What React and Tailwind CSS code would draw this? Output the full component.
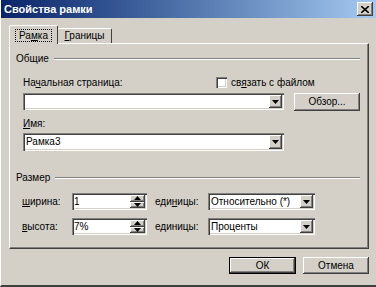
import React from "react";

const raised =
  "bg-[#d4d0c8] shadow-[inset_-1px_-1px_#404040,inset_1px_1px_#ffffff,inset_-2px_-2px_#808080]";
const sunken =
  "bg-white shadow-[inset_1px_1px_#808080,inset_2px_2px_#404040,inset_-1px_-1px_#ffffff,inset_-2px_-2px_#d4d0c8]";

function Arrow({ up }) {
  return (
    <svg width="7" height="4" viewBox="0 0 7 4">
      <path d={up ? "M3.5 0 L7 4 L0 4 Z" : "M0 0 L7 0 L3.5 4 Z"} fill="#000" />
    </svg>
  );
}

function Combo({ value, width, height = "h-[17px]" }) {
  return (
    <div className={`${sunken} ${width} ${height} flex items-stretch p-[2px]`}>
      <div className="flex-1 flex items-center pl-[1px] leading-none">{value}</div>
      <div className={`${raised} w-[13px] flex items-center justify-center`}>
        <Arrow />
      </div>
    </div>
  );
}

function Spin({ value }) {
  return (
    <div className={`${sunken} w-[75px] h-[17px] flex items-stretch p-[2px]`}>
      <div className="flex-1 flex items-center leading-none">{value}</div>
      <div className="w-[15px] flex flex-col">
        <div className={`${raised} flex-1 flex items-center justify-center`}>
          <Arrow up />
        </div>
        <div className={`${raised} flex-1 flex items-center justify-center`}>
          <Arrow />
        </div>
      </div>
    </div>
  );
}

function Group({ title }) {
  return (
    <div className="flex items-center h-[13px] pl-[6px] pr-[8px]">
      <span className="leading-none">{title}</span>
      <div className="flex-1 ml-[5px] h-[2px] border-t border-t-[#808080] border-b border-b-white" />
    </div>
  );
}

export default function App() {
  return (
    <div className="w-[376px] h-[287px] bg-[#d4d0c8] text-black text-[10px] font-['Liberation_Sans',Arial,sans-serif] flex flex-col border-l border-l-white border-b-2 border-b-[#404040]">
      <div className="h-[18px] flex items-center justify-between pl-[3px] pr-[3px] bg-linear-to-r from-[#0a246a] to-[#a6caf0]">
        <span className="text-white font-bold text-[11px] leading-none">Свойства рамки</span>
        <div className={`${raised} w-[16px] h-[14px] flex items-center justify-center`}>
          <svg width="8" height="7" viewBox="0 0 8 7">
            <path d="M0 0 L8 7 M8 0 L0 7" stroke="#000" strokeWidth="1.6" />
          </svg>
        </div>
      </div>

      <div className="pl-[8px] pt-[7px]">
        <div className="flex items-end h-[18px]">
          <div className="relative z-10 w-[49px] h-[19px] -mb-px bg-[#d4d0c8] border-t border-l border-white border-r border-r-[#404040] rounded-t-[2px] flex items-start justify-center pt-[3px]">
            <span className="border border-dotted border-black px-[3px] leading-[11px]">
              Ра<u>м</u>ка
            </span>
          </div>
          <div className="w-[54px] h-[15px] border-t border-white border-r border-r-[#404040] rounded-t-[2px] flex items-center justify-center">
            <span className="leading-none">
              <u>Г</u>раницы
            </span>
          </div>
        </div>

        <div className="w-[360px] h-[206px] border-t border-l border-white border-r border-r-[#404040] border-b border-b-[#404040] shadow-[inset_-1px_-1px_#808080] flex flex-col">
          <div className="mt-[8px]">
            <Group title="Общие" />
          </div>

          <div className="mt-[11px] flex items-center h-[13px]">
            <span className="w-[206px] pl-[13px] leading-none">
              На<u>ч</u>альная страница:
            </span>
            <div className={`${sunken} w-[11px] h-[11px]`} />
            <span className="ml-[4px] leading-none">
              св<u>я</u>зать с файлом
            </span>
          </div>

          <div className="mt-[4px] flex items-start pl-[13px]">
            <Combo value="" width="w-[261px]" />
            <div className={`${raised} ml-[10px] w-[66px] h-[18px] flex items-center justify-center leading-none`}>
              Обзор...
            </div>
          </div>

          <div className="mt-[6px] h-[13px] flex items-center pl-[13px] leading-none">
            <span>
              <u>И</u>мя:
            </span>
          </div>

          <div className="mt-[3px] pl-[13px]">
            <Combo value="Рамка3" width="w-[261px]" height="h-[18px]" />
          </div>

          <div className="mt-[20px]">
            <Group title="Размер" />
          </div>

          <div className="mt-[9px] flex items-center">
            <span className="w-[62px] pl-[12px] leading-none">
              <u>ш</u>ирина:
            </span>
            <Spin value="1" />
            <span className="w-[61px] pl-[8px] leading-none">
              еди<u>н</u>ицы:
            </span>
            <Combo value="Относительно (*)" width="w-[107px]" />
          </div>

          <div className="mt-[8px] flex items-center">
            <span className="w-[62px] pl-[12px] leading-none">
              <u>в</u>ысота:
            </span>
            <Spin value="7%" />
            <span className="w-[61px] pl-[8px] leading-none">
              единицы:
            </span>
            <Combo value="Проценты" width="w-[107px]" />
          </div>
        </div>

        <div className="mt-[8px] flex justify-end gap-[7px] pr-[7px]">
          <div className="w-[67px] h-[17px] border border-black">
            <div className={`${raised} w-full h-full flex items-center justify-center leading-none`}>
              ОК
            </div>
          </div>
          <div className={`${raised} w-[66px] h-[17px] flex items-center justify-center leading-none`}>
            Отмена
          </div>
        </div>
      </div>
    </div>
  );
}
